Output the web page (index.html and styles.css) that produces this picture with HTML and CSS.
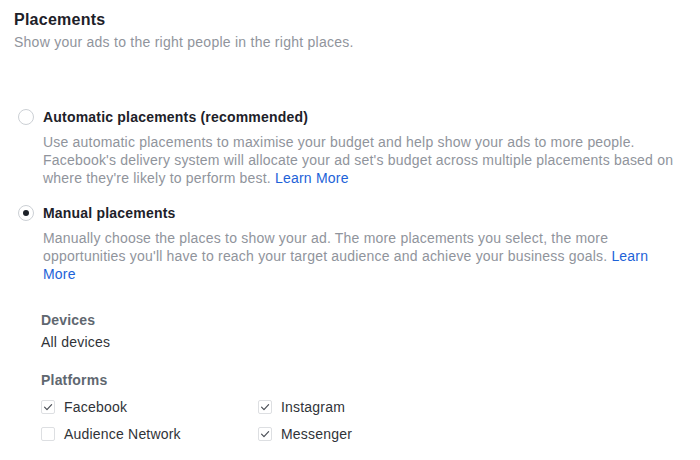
FILE: index.html
```html
<!DOCTYPE html>
<html>
<head>
<meta charset="utf-8">
<link rel="stylesheet" href="styles.css">
</head>
<body>
<div class="page">
  <header class="head">
    <h1 class="title">Placements</h1>
    <p class="subtitle">Show your ads to the right people in the right places.</p>
  </header>

  <section class="option opt-auto">
    <div class="option-row">
      <span class="radio"></span>
      <span class="option-label">Automatic placements (recommended)</span>
    </div>
    <p class="desc">Use automatic placements to maximise your budget and help show your ads to more people. Facebook's delivery system will allocate your ad set's budget across multiple placements based on where they're likely to perform best. <a class="link" href="#">Learn More</a></p>
  </section>

  <section class="option opt-manual">
    <div class="option-row">
      <span class="radio checked"></span>
      <span class="option-label">Manual placements</span>
    </div>
    <p class="desc">Manually choose the places to show your ad. The more placements you select, the more opportunities you'll have to reach your target audience and achieve your business goals. <a class="link" href="#">Learn More</a></p>

    <div class="group devices">
      <div class="group-label">Devices</div>
      <div class="group-value">All devices</div>
    </div>

    <div class="group platforms">
      <div class="group-label">Platforms</div>
      <div class="checks">
        <label class="check"><span class="box on"><svg viewBox="0 0 14 14" width="14" height="14"><path d="M3 7.2 L5.8 10 L11.2 4.2" fill="none" stroke="#4b4f56" stroke-width="1.4" stroke-linecap="round" stroke-linejoin="round"/></svg></span>Facebook</label>
        <label class="check"><span class="box on"><svg viewBox="0 0 14 14" width="14" height="14"><path d="M3 7.2 L5.8 10 L11.2 4.2" fill="none" stroke="#4b4f56" stroke-width="1.4" stroke-linecap="round" stroke-linejoin="round"/></svg></span>Instagram</label>
        <label class="check"><span class="box"></span>Audience Network</label>
        <label class="check"><span class="box on"><svg viewBox="0 0 14 14" width="14" height="14"><path d="M3 7.2 L5.8 10 L11.2 4.2" fill="none" stroke="#4b4f56" stroke-width="1.4" stroke-linecap="round" stroke-linejoin="round"/></svg></span>Messenger</label>
      </div>
    </div>
  </section>
</div>
</body>
</html>
```

FILE: styles.css
```css
html, body {
  margin: 0;
  padding: 0;
  background: #ffffff;
}
body {
  font-family: "Liberation Sans", Arial, sans-serif;
  color: #1d2129;
  -webkit-font-smoothing: antialiased;
}
.page {
  padding: 10px 14px 0 14px;
}
.title {
  margin: 0;
  font-size: 16px;
  line-height: 20px;
  font-weight: bold;
  letter-spacing: 0.25px;
  color: #1d2129;
}
.subtitle {
  margin: 2px 0 0 0;
  font-size: 14px;
  line-height: 20px;
  letter-spacing: 0.25px;
  color: #90949c;
}
.option {
  padding-left: 4px;
}
.opt-auto {
  margin-top: 55px;
}
.opt-manual {
  margin-top: 16px;
}
.option-row {
  display: flex;
  align-items: center;
  gap: 9px;
  height: 20px;
}
.radio {
  box-sizing: border-box;
  width: 16px;
  height: 16px;
  border-radius: 50%;
  border: 1px solid #ccd0d5;
  background: #fff;
  display: flex;
  align-items: center;
  justify-content: center;
  flex: none;
}
.radio.checked::after {
  content: "";
  width: 6px;
  height: 6px;
  border-radius: 50%;
  background: #1d2129;
}
.option-label {
  font-size: 14px;
  font-weight: bold;
  letter-spacing: 0.2px;
  color: #1d2129;
}
.desc {
  margin: 6px 0 0 25px;
  font-size: 14px;
  line-height: 18px;
  letter-spacing: 0.2px;
  color: #90949c;
  max-width: 636px;
}
.link {
  color: #1d62d8;
  text-decoration: none;
}
.group {
  margin-left: 23px;
}
.devices {
  margin-top: 27px;
}
.platforms {
  margin-top: 18px;
}
.group-label {
  font-size: 14px;
  line-height: 20px;
  font-weight: bold;
  letter-spacing: 0.2px;
  color: #606770;
}
.group-value {
  margin-top: 2px;
  font-size: 14px;
  line-height: 20px;
  letter-spacing: 0.2px;
  color: #303338;
}
.checks {
  margin-top: 7px;
  display: grid;
  grid-template-columns: 217px 200px;
  row-gap: 7px;
}
.check {
  display: flex;
  align-items: center;
  gap: 9px;
  height: 20px;
  font-size: 14px;
  letter-spacing: 0.2px;
  color: #303338;
}
.box {
  box-sizing: border-box;
  width: 14px;
  height: 14px;
  border: 1px solid #dddfe2;
  border-radius: 2px;
  background: #fff;
  flex: none;
  display: flex;
  align-items: center;
  justify-content: center;
}
.box svg {
  display: block;
}
```
